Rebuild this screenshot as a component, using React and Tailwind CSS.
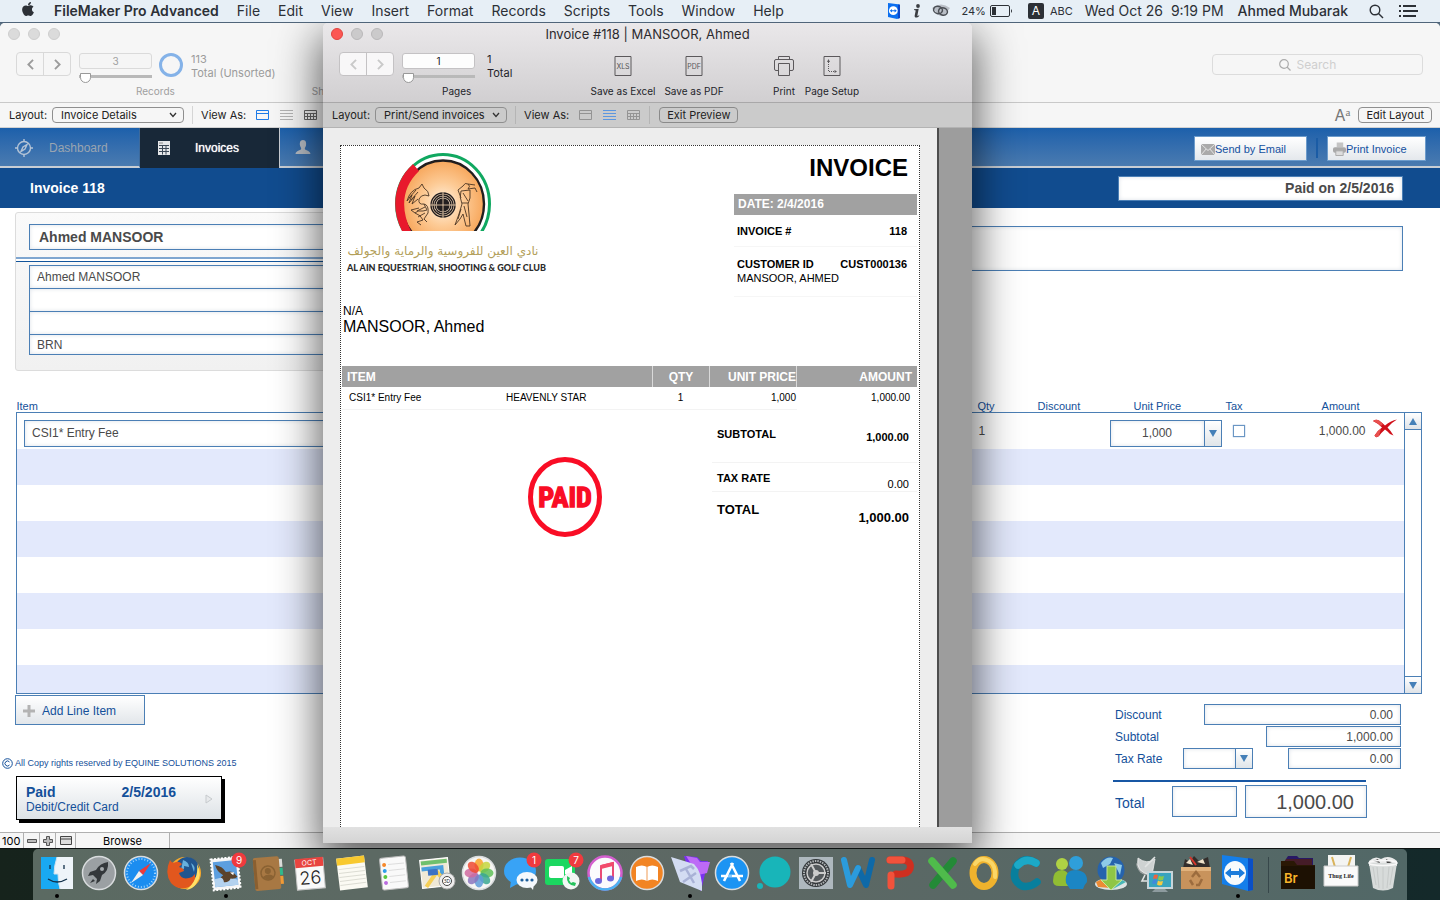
import React from "react";
import { FaApple } from "react-icons/fa";

const menus = ["File", "Edit", "View", "Insert", "Format", "Records", "Scripts", "Tools", "Window", "Help"];

function MenuBar() {
  return (
    <header className="relative z-20 flex h-[23px] shrink-0 items-center justify-between border-b border-[#50657a] bg-[#e7eff6] pl-5 pr-[22px] font-['Inter',sans-serif] text-[14px] leading-none text-[#2c3036]">
      <nav className="flex items-center gap-[18px] whitespace-nowrap" aria-label="Application menu">
        <button aria-label="Apple menu"><FaApple size={16} className="-mt-1" /></button>
        <button className="font-semibold">FileMaker Pro Advanced</button>
        {menus.map((m) => <button key={m}>{m}</button>)}
      </nav>
      <div className="flex items-center whitespace-nowrap">
        <svg width="14" height="16" viewBox="0 0 14 16" className="mr-3">
          <path d="M1 0L13 1.5V15L10 16L1 14Z" fill="#0b6ff0" />
          <path d="M11 1.5L13 2V15L11 15.5Z" fill="#0a46c9" />
          <circle cx="6.300" cy="7.700" r="4.400" fill="#fff" />
          <path d="M2.800 7.700L5 6v1.200h2.600V6L9.800 7.700 7.600 9.400V8.200H5v1.200Z" fill="#0b6ff0" />
        </svg>
        <svg width="8" height="14" viewBox="0 0 8 14" className="mr-2.5 text-[#3a3d42]" fill="currentColor">
          <circle cx="5" cy="2" r="1.900" /><path d="M1 5.200L5.700 4.800 4.400 11.400C4.300 12.300 5 12 6.300 11L6 12.300C4.500 14 1.200 14.300 1.700 11.600L2.700 6.400 1 6Z" />
        </svg>
        <svg width="20" height="14" viewBox="0 0 20 14" className="mr-2.5">
          <path d="M1 4Q10-3 19 4L13 12H9Z" fill="#b9bec6" />
          <g fill="none" stroke="#4b4f55" strokeWidth="1.500"><ellipse cx="7" cy="6" rx="4.500" ry="3.600" transform="rotate(15 7 6)" /><ellipse cx="12" cy="7.500" rx="4.500" ry="3.600" transform="rotate(15 12 7.500)" /></g>
        </svg>
        <span className="mr-1 text-[11px]">24%</span>
        <svg width="23" height="12" viewBox="0 0 23 12" className="mr-[15px]">
          <rect x=".5" y=".5" width="19" height="11" rx="1.500" fill="none" stroke="#2c3036" />
          <rect x="2" y="2" width="4" height="8" fill="#2c3036" /><path d="M21 4Q23 6 21 8Z" fill="#2c3036" />
        </svg>
        <span className="mr-1.5 flex h-4 w-4 items-center justify-center rounded-[2px] bg-[#2c3036] text-[12px] text-white">A</span>
        <span className="mr-3 text-[11px]">ABC</span>
        <span className="mr-2">Wed Oct 26</span>
        <span className="mr-3.5">9:19 PM</span>
        <span className="mr-[21px] font-medium">Ahmed Mubarak</span>
        <svg width="15" height="15" viewBox="0 0 15 15" className="mr-[15px]" fill="none" stroke="#2c3036" strokeWidth="1.400"><circle cx="6" cy="6" r="4.800" /><path d="M9.500 9.500L14 14" /></svg>
        <svg width="19" height="12" viewBox="0 0 19 12" fill="#2c3036"><path d="M0 0h2v2H0zM4 0h13v2H4zM0 5h2v2H0zM4 5h15v2H4zM0 10h2v2H0zM4 10h13v2H4z" /></svg>
      </div>
    </header>
  );
}

function Lights({ active }) {
  return (
    <div className="flex gap-2">
      <span className={active ? "h-3 w-3 rounded-full border border-[#e0443e] bg-[#fc5753]" : "h-3 w-3 rounded-full border border-[#cecece] bg-[#dbdbdb]"} />
      <span className={active ? "h-3 w-3 rounded-full border border-[#b9b8b9] bg-[#cbcacb]" : "h-3 w-3 rounded-full border border-[#cecece] bg-[#dbdbdb]"} />
      <span className={active ? "h-3 w-3 rounded-full border border-[#b9b8b9] bg-[#cbcacb]" : "h-3 w-3 rounded-full border border-[#cecece] bg-[#dbdbdb]"} />
    </div>
  );
}

function Chevron({ flip }) {
  return (
    <svg width="7" height="11" viewBox="0 0 8 13" fill="none" stroke="currentColor" strokeWidth="2.200">
      <path d={flip ? "M1 1L6.500 6.500 1 12" : "M7 1L1.500 6.500 7 12"} />
    </svg>
  );
}

function Pager({ value, label, active }) {
  return (
    <div className="flex gap-2">
      <div className={active ? "flex h-6 w-[55px] rounded-[4px] border border-[#c4c2c4] bg-[#f8f7f8] text-[#c9c9c9]" : "flex h-6 w-[55px] rounded-[4px] border border-[#d9d9d9] text-[#9b9b9b]"}>
        <button aria-label={`Previous ${label}`} className="flex flex-1 items-center justify-center border-r border-inherit"><Chevron /></button>
        <button aria-label={`Next ${label}`} className="flex flex-1 items-center justify-center"><Chevron flip /></button>
      </div>
      <div className="flex w-[73px] flex-col">
        <input aria-label={label} defaultValue={value} className={active ? "mt-px h-4 w-full rounded-[3px] border border-[#c4c2c4] bg-[#fdfdfd] text-center text-[10px] leading-none text-[#222]" : "mt-px h-4 w-full rounded-[3px] border border-[#dadada] bg-[#f5f5f5] text-center text-[10px] leading-none text-[#a0a0a0]"} />
        <input type="range" aria-label={`${label} slider`} defaultValue="2" className="mt-1 h-[10px] w-full appearance-none bg-[linear-gradient(#b9b9b9,#b9b9b9)] bg-[length:100%_3px] bg-[position:center_2px] bg-no-repeat [&::-webkit-slider-thumb]:h-[10px] [&::-webkit-slider-thumb]:w-[11px] [&::-webkit-slider-thumb]:appearance-none [&::-webkit-slider-thumb]:rounded-t-[2px] [&::-webkit-slider-thumb]:rounded-b-full [&::-webkit-slider-thumb]:border [&::-webkit-slider-thumb]:border-[#999] [&::-webkit-slider-thumb]:bg-white" />
      </div>
    </div>
  );
}

function LayoutSelect({ value }) {
  return (
    <label className="flex items-center gap-[5px] whitespace-nowrap">
      Layout:
      <span className="flex h-4 items-center rounded-[4px] border border-[#8f8f8f] pr-1.5">
        <select className="w-[120px] appearance-none bg-transparent pl-2 leading-none outline-none">
          <option>{value}</option>
        </select>
        <svg width="8" height="6" viewBox="0 0 8 6" fill="none" stroke="#333" strokeWidth="1.300" className="-ml-1"><path d="M1 1L4 4.500 7 1" /></svg>
      </span>
    </label>
  );
}

function ViewIcons({ selected }) {
  const form = selected === "form" ? "#1d7be8" : "#949494";
  const list = selected === "list" ? "#5c97e0" : "#b4b4b4";
  const table = selected === "form" ? "#666" : "#949494";
  return (
    <div className="flex items-center gap-[11px]">
      <button aria-label="Form view"><svg className="block" width="13" height="10" viewBox="0 0 13 10" fill="none" stroke={form}><path d="M.5.500h12v9H.500zM.5 3.500h12" /></svg></button>
      <button aria-label="List view"><svg className="block" width="13" height="10" viewBox="0 0 13 10" stroke={list}><path d="M0 .5h13M0 3.500h13M0 6.500h13M0 9.500h13" /></svg></button>
      <button aria-label="Table view"><svg className="block" width="13" height="10" viewBox="0 0 13 10" fill="none" stroke={table}><path d="M.5.500h12v9H.500zM.5 3.500h12M.5 6.500h12M3.500 3v6.500M6.500 3v6.500M9.500 3v6.500" /></svg></button>
    </div>
  );
}

function NavIcon({ children }) {
  return <svg width="20" height="20" viewBox="0 0 20 20" className="shrink-0">{children}</svg>;
}

const fieldCls = "border border-[#4b7fb5] bg-white text-[#4a4a4a] shadow-[inset_0_0_4px_#dde1e8] outline-none";

function Tri({ up }) {
  return <svg width="8" height="7" viewBox="0 0 8 7" fill="#4580b8"><path d={up ? "M4 0L8 7H0Z" : "M0 0H8L4 7Z"} /></svg>;
}

function Combo({ label, value, className }) {
  return (
    <span className={`flex border border-[#4b7fb5] ${className}`}>
      <input aria-label={label} defaultValue={value} className="min-w-0 flex-1 bg-white text-center text-[#4a4a4a] shadow-[inset_0_0_4px_#dde1e8] outline-none" />
      <button aria-label={`${label} options`} className="flex w-[17px] shrink-0 items-center justify-center border-l border-[#4b7fb5] bg-gradient-to-b from-white to-[#e0e5e9]"><Tri /></button>
    </span>
  );
}

function LineItems() {
  return (
    <div className="ml-4 mr-[18px] mt-[29px] flex">
      <table className="min-w-0 flex-1 table-fixed border-collapse text-[12px] leading-none text-[#4a4a4a]">
        <colgroup>
          <col /><col className="w-[58px]" /><col className="w-[74px]" /><col className="w-[118px]" /><col className="w-[34px]" /><col className="w-[112px]" /><col className="w-[36px]" />
        </colgroup>
        <thead>
          <tr className="h-3 text-left text-[11px] leading-[12px] text-[#14509a] [&>th]:p-0 [&>th]:font-normal">
            <th>Item</th>
            <th><span className="pl-[5px]">Qty</span></th>
            <th><span className="pl-[7px]">Discount</span></th>
            <th><span className="pl-[29px]">Unit Price</span></th>
            <th><span className="pl-[3px]">Tax</span></th>
            <th className="text-right"><span className="pr-[9px]">Amount</span></th>
            <th aria-label="Delete" />
          </tr>
        </thead>
        <tbody className="border border-[#4b7fb5] [&_td]:p-0">
          <tr className="h-9 bg-white">
            <td><input aria-label="Item" defaultValue="CSI1* Entry Fee" className={`ml-[7px] mt-[5px] block h-[27px] w-[calc(100%-16px)] px-[7px] text-[12px] ${fieldCls}`} /></td>
            <td><span className="pl-1.5">1</span></td>
            <td />
            <td><Combo label="Unit price" value="1,000" className="ml-[5px] mt-[5px] h-[27px] w-[112px] text-[12px]" /></td>
            <td><input type="checkbox" aria-label="Tax" className="ml-2.5 mt-px block h-3 w-3 appearance-none border border-[#6a96c4] bg-white shadow-[0_0_1px_#6a96c4]" /></td>
            <td className="text-right"><span className="pr-[3px]">1,000.00</span></td>
            <td>
              <button aria-label="Delete line" className="-mt-1 ml-1 block">
                <svg width="24" height="19" viewBox="0 0 24 19"><path d="M0 2Q3 0 6 1.500Q9 3.500 12 6.500Q18 1.500 24 .5Q18 4 14.500 8.500Q18 12 20.500 16.500L17 15Q14.500 12 12 10.500Q8 14 6 17Q3 19.500 1.500 16.500Q4 12 9 8.500Q6 5 0 2Z" fill="#d0101a" /><path d="M0 2Q3 0 6 1.500L10 5 8 7Q5 4 0 2ZM2 16Q5 11 8 9.500L6 17Q3 19.500 1.500 16.500Z" fill="#e8504e" /></svg>
              </button>
            </td>
          </tr>
          {[1, 2, 3, 4, 5, 6, 7].map((i) => (
            <tr key={i} className={i === 7 ? "h-[29px] bg-[#e3e9fc]" : i % 2 ? "h-9 bg-[#e3e9fc]" : "h-9 bg-white"}><td colSpan="7" /></tr>
          ))}
        </tbody>
      </table>
      <div className="mt-3 flex w-[17px] flex-col border border-l-0 border-[#4b7fb5] bg-white">
        <button aria-label="Scroll up" className="flex h-[17px] items-center justify-center border-b border-[#4b7fb5] bg-gradient-to-b from-white to-[#dfe3e8]"><Tri up /></button>
        <span className="flex-1" />
        <button aria-label="Scroll down" className="flex h-[17px] items-center justify-center border-t border-[#4b7fb5] bg-gradient-to-b from-white to-[#dfe3e8]"><Tri /></button>
      </div>
    </div>
  );
}

function DetailsWindow() {
  return (
    <section className="flex flex-1 flex-col rounded-t-[5px] bg-white font-['Liberation_Sans',Arial,sans-serif]">
      <div className="flex h-20 shrink-0 justify-between rounded-t-[5px] border-b border-[#c9c9c9] bg-[#f6f6f6] font-['Inter',sans-serif]">
        <div className="flex flex-col pl-2 pt-[5px]">
          <Lights />
          <div className="ml-2 mt-3 flex">
            <Pager value="3" label="Records" />
            <svg width="24" height="24" viewBox="0 0 24 24" className="ml-[7px] mt-px"><circle cx="12" cy="12" r="10.500" fill="none" stroke="#84b2e8" strokeWidth="3" /></svg>
            <div className="ml-2 text-[11px] leading-[14px] text-[#9b9b9b]">113<br />Total (Unsorted)</div>
          </div>
          <div className="ml-[128px] mt-px flex gap-[137px] text-[10px] leading-[14px] text-[#a0a0a0]"><span>Records</span><span>Sh</span></div>
        </div>
        <label className="mr-[17px] mt-[31px] flex h-[21px] w-[211px] items-center justify-center gap-1.5 rounded-[4px] border border-[#dcdcdc] text-[12px]">
          <svg width="12" height="12" viewBox="0 0 12 12" fill="none" stroke="#ababab" strokeWidth="1.200"><circle cx="5" cy="5" r="4.300" /><path d="M8 8L11.500 11.500" /></svg>
          <input aria-label="Search" placeholder="Search" className="w-[60px] bg-transparent outline-none placeholder:text-[#cfcfcf]" />
        </label>
      </div>
      <div className="flex h-[25px] shrink-0 items-center justify-between border-b border-[#d2d2d2] bg-[#f6f6f6] pl-[9px] pr-2 font-['Inter',sans-serif] text-[11px] text-[#222]">
        <div className="flex items-center">
          <LayoutSelect value="Invoice Details" />
          <span className="mx-2 h-[18px] w-px bg-[#d5d5d5]" />
          <span className="mr-2.5">View As:</span>
          <ViewIcons selected="form" />
        </div>
        <div className="flex items-center gap-2">
          <button aria-label="Formatting bar" className="text-[16px] leading-none text-[#777]">A<sup className="font-['Liberation_Serif',serif] text-[11px]">a</sup></button>
          <button className="h-4 rounded-[4px] border border-[#8f8f8f] px-[7px] leading-none">Edit Layout</button>
        </div>
      </div>
      <div className="flex h-10 shrink-0 justify-between bg-[#114c8f] text-[12px]">
        <nav className="flex flex-1" aria-label="Sections">
          <a href="#dashboard" className="flex w-[140px] items-center border-b-2 border-r border-b-[#c9ced4] border-r-[#3d6a9c] bg-gradient-to-b from-[#1c60ab] to-[#4a7bb0] pl-3.5 pt-0.5 text-[#9aa5b1]">
            <NavIcon><g fill="none" stroke="#b4c4d6" strokeWidth="1.400"><circle cx="10" cy="10" r="6.500" /><path d="M10 1v3M10 16v3M1 10h3M16 10h3M13 6.500L9 9 7 13.500 11 11Z" /></g></NavIcon>
            <span className="ml-[15px]">Dashboard</span>
          </a>
          <a href="#invoices" className="flex w-[139px] items-center bg-[#182838] pl-3.5 text-white">
            <NavIcon><path d="M4 3h12v14H4z" fill="#e5e7e9" /><path d="M5 7.500h10M5 10.500h10M5 13.500h10M8.500 7.500v9M12 7.500v9" stroke="#3b4856" /><path d="M5 5h4" stroke="#888" /></NavIcon>
            <span className="ml-[21px] [text-shadow:0_0_1px_#fff]">Invoices</span>
          </a>
          <a href="#contacts" aria-label="Contacts" className="flex flex-1 items-center border-b-2 border-l border-b-[#c9ced4] border-l-[#c9ced4] bg-gradient-to-b from-[#1c60ab] to-[#4a7bb0] pl-[13px]">
            <NavIcon><path d="M10 3C13 3 13.500 6 13 8.500C12.600 10.200 11.800 10.500 11.800 12C12.500 13.500 17 13.500 17.500 17H2.500C3 13.500 7.500 13.500 8.200 12C8.200 10.500 7.400 10.200 7 8.500C6.500 6 7 3 10 3Z" fill="#b8bec5" /></NavIcon>
          </a>
        </nav>
        <div className="flex items-center border-b-2 border-[#c9ced4] bg-gradient-to-b from-[#1c60ab] to-[#4a7bb0] pr-3.5 pt-0.5 text-[11px]">
          <button className="flex h-[25px] w-[113px] items-center border border-[#6d9ccc] bg-gradient-to-b from-white to-[#e4e8ec] pl-1.5 pt-0.5 text-[#1450a0]">
            <svg width="14" height="11" viewBox="0 0 15 11" preserveAspectRatio="none"><path d="M0 0h15v11H0z" fill="#aaa" /><path d="M0 0L7.500 6.500 15 0M0 11L5.500 5M15 11L9.500 5" fill="none" stroke="#e6e6e6" /></svg>Send by Email
          </button>
          <span className="mx-[9px] h-5 w-0.5 bg-[#1b5ca5]" />
          <button className="flex h-[25px] w-[99px] items-center border border-[#6d9ccc] bg-gradient-to-b from-white to-[#e4e8ec] pl-[5px] pt-0.5 text-[#1450a0]">
            <svg width="13" height="14" viewBox="0 0 14 14"><path d="M4 0h7v5H4z" fill="#c4c4c4" /><rect y="5" width="14" height="6" rx="2" fill="#a9a9a9" /><path d="M3 9h8v5H3z" fill="#ddd" stroke="#aaa" /></svg>Print Invoice
          </button>
        </div>
      </div>
      <div className="flex h-10 shrink-0 items-center justify-between bg-[#114c8f] pl-[30px] pr-[37px] font-bold">
        <h1 className="text-[14px] text-white">Invoice 118</h1>
        <input aria-label="Status" defaultValue="Paid on 2/5/2016" className={`h-[25px] w-[285px] pr-2 text-right text-[14px] ${fieldCls}`} />
      </div>

      <div className="mt-1 flex justify-between">
        <div className="ml-[15px] h-[159px] w-[420px] rounded-[3px] border border-[#dcdcdc] bg-gradient-to-b from-[#fafafa] to-[#f1f1f1] pt-[11px]">
          <input aria-label="Customer" defaultValue="Ahmed MANSOOR" className={`ml-[13px] block h-[26px] w-[390px] px-[9px] text-[14px] font-bold ${fieldCls}`} />
          <div className="mt-[7px] h-[5px] border-b border-t-2 border-b-[#12549b] border-t-[#7fa6d0] bg-white" />
          <div className="ml-[13px] mt-[3px] flex w-[390px] flex-col">
            <input aria-label="Address line 1" defaultValue="Ahmed MANSOOR" className={`h-6 px-[7px] text-[12px] ${fieldCls}`} />
            <input aria-label="Address line 2" className={`-mt-px h-6 px-[7px] text-[12px] ${fieldCls}`} />
            <input aria-label="Address line 3" className={`-mt-px h-6 px-[7px] text-[12px] ${fieldCls}`} />
            <input aria-label="Country" defaultValue="BRN" className={`-mt-px h-[21px] px-[7px] text-[12px] ${fieldCls}`} />
          </div>
        </div>
        <textarea aria-label="Notes" className={`mr-[37px] mt-3.5 h-[45px] w-[600px] resize-none ${fieldCls}`} />
      </div>

      <LineItems />

      <div className="flex flex-1 justify-between text-[#14509a]">
        <div className="flex flex-col items-start">
          <button className="ml-[15px] mt-px flex h-[30px] w-[130px] items-center gap-[7px] border border-[#4b7fb5] bg-gradient-to-b from-white to-[#e2e6ea] pl-[7px] pt-px text-[12px]">
            <svg width="12" height="12" viewBox="0 0 12 12" fill="#b3b3b3"><path d="M4.500 0h3v4.500H12v3H7.500V12h-3V7.500H0v-3h4.500z" /></svg>Add Line Item
          </button>
          <div className="ml-0.5 mt-8 flex items-center gap-0.5 text-[9px] leading-[12px]">
            <svg width="11" height="11" viewBox="0 0 11 11" fill="none" stroke="#14509a"><circle cx="5.500" cy="5.500" r="4.800" /><path d="M7.500 4A2.500 2.500 0 1 0 7.500 7" /></svg>
            All Copy rights reserved by EQUINE SOLUTIONS 2015
          </div>
          <button className="ml-4 mt-[7px] flex h-[44px] w-[206px] items-center justify-between border border-black bg-gradient-to-b from-white to-[#dde2e6] pl-[9px] pr-2 pt-0.5 text-left shadow-[3px_3px_0_#000]">
            <span className="flex w-[150px] flex-col">
              <span className="flex justify-between text-[14px] font-bold leading-[16px]"><span>Paid</span><span>2/5/2016</span></span>
              <span className="text-[12px] leading-[14px]">Debit/Credit Card</span>
            </span>
            <svg width="8" height="10" viewBox="0 0 8 10" fill="#e8eaec" stroke="#c6cacd"><path d="M1 1L7 5 1 9Z" /></svg>
          </button>
        </div>
        <div className="mr-[39px] mt-2.5 flex w-[288px] flex-col text-[12px]">
          <label className="mb-px flex items-center justify-between pl-0.5">Discount<input defaultValue="0.00" className={`h-[21px] w-[197px] pr-[7px] pt-px text-right ${fieldCls}`} /></label>
          <label className="mb-px flex items-center justify-between pl-0.5">Subtotal<input defaultValue="1,000.00" className={`h-[21px] w-[135px] pr-[7px] pt-px text-right ${fieldCls}`} /></label>
          <div className="flex items-center pl-0.5"><span className="w-[68px]">Tax Rate</span><Combo label="Tax rate" className="h-[21px] w-[70px]" /><input aria-label="Tax amount" defaultValue="0.00" className={`ml-auto h-[21px] w-[113px] pr-[7px] pt-px text-right ${fieldCls}`} /></div>
          <div className="mr-[35px] mt-[11px] h-0.5 bg-[#1857a4]" />
          <div className="mr-[34px] mt-[3px] flex items-center pl-0.5"><span className="pt-1 text-[14px]">Total</span><input aria-label="Currency" className={`ml-auto mr-2 h-[31px] w-[65px] ${fieldCls}`} /><input aria-label="Total" defaultValue="1,000.00" className={`h-[33px] w-[122px] pr-3 pt-0.5 text-right text-[20px] ${fieldCls}`} /></div>
        </div>
      </div>

      <footer className="flex h-4 shrink-0 items-stretch border-t border-[#b0b0b0] bg-[#f6f6f6] font-['Inter',sans-serif] text-[11px] leading-[16px] text-black">
        <span className="w-6 border-r border-[#b0b0b0] pl-0.5">100</span>
        <button aria-label="Zoom out" className="flex w-4 items-center justify-center border-r border-[#b0b0b0]"><svg width="10" height="4" viewBox="0 0 10 4"><path d="M.5.500h9v3H.500z" fill="#bbb" stroke="#555" /></svg></button>
        <button aria-label="Zoom in" className="flex w-4 items-center justify-center border-r border-[#b0b0b0]"><svg width="10" height="10" viewBox="0 0 10 10"><path d="M3.500.500h3v3h3v3h-3v3h-3v-3h-3v-3h3z" fill="#bbb" stroke="#555" /></svg></button>
        <button aria-label="Toggle status toolbar" className="flex w-5 items-center justify-center border-r border-[#b0b0b0]"><svg width="12" height="9" viewBox="0 0 12 9"><path d="M.5.500h11v8H.500zM.5 3h11" fill="#ddd" stroke="#444" /></svg></button>
        <button className="w-[94px] border-r border-[#b0b0b0]">Browse</button>
      </footer>
    </section>
  );
}

function ClubLogo() {
  return (
    <svg width="96" height="78" viewBox="0 0 96 78" className="ml-12 block">
      <defs><radialGradient id="sun"><stop offset="0" stopColor="#fff3e4" /><stop offset=".5" stopColor="#fdcb96" /><stop offset="1" stopColor="#f7a75c" /></radialGradient></defs>
      <ellipse cx="48" cy="51" rx="46.500" ry="49.500" fill="#fff" stroke="#10a860" strokeWidth="3" />
      <ellipse cx="48" cy="51" rx="41" ry="43.500" fill="url(#sun)" stroke="#211d1e" strokeWidth="2.400" />
      <path d="M7 78C-5 55-1 28 18 11L24 18C7 34 5 56 16 78Z" fill="#e8192c" />
      <g fill="none" stroke="#231f20" strokeWidth="1.400"><circle cx="48" cy="52" r="12" /><circle cx="48" cy="52" r="10" /><circle cx="48" cy="52" r="8" /><circle cx="48" cy="52" r="6" fill="#231f20" /></g>
      <path d="M48 39v26M35 52h26" stroke="#f8d9b5" strokeWidth=".8" />
      <g fill="none" stroke="#4b3524" strokeWidth=".9" strokeLinejoin="round">
        <path d="M12 48Q15 37 24 35L27 31 29 35Q34 38 34 43L30 42Q26 42 24 46Q23 52 29 51L32 57 28 58Q22 57 20 60Q26 62 28 67L22 69 26 72M12 48L17 42 14 50 20 43 17 51 23 46M14 45L21 37M16 47L23 39M29 51Q34 52 33 60L29 66 32 69M20 60L16 57 24 55M22 58L30 54M23 64L30 60" />
        <path d="M63 37L68 33Q70 29 73 31Q76 33 73 36L80 35 82 39M66 38L75 37Q76 46 73 51L74 61 75 73 71 73 68 61 65 66 60 72 64 61 67 51Q64 44 66 38ZM73 31L80 32M67 50h6M63 37L66 45M68 40L73 48M69 53L72 64M66 56L63 66" />
      </g>
    </svg>
  );
}

function PrintedInvoice() {
  return (
    <article className="min-h-0 flex-1 overflow-hidden border border-b-0 border-dotted border-[#333] bg-white pl-px pr-0.5 text-black">
      <div className="flex justify-between">
        <div className="pl-[5px] pt-[7px]">
          <ClubLogo />
          <p dir="rtl" lang="ar" className="mt-2 w-[192px] whitespace-nowrap text-center font-['DejaVu_Sans',sans-serif] text-[12px] leading-[24px] text-[#b3a05a]">نادي العين للفروسية والرماية والجولف</p>
          <p className="w-[192px] whitespace-nowrap text-center font-['Lato',sans-serif] text-[9px] font-black leading-[10px] text-[#2b2b2b]">AL AIN EQUESTRIAN, SHOOTING &amp; GOLF CLUB</p>
        </div>
        <div className="w-[183px]">
          <h2 className="pr-[9px] pt-[6px] text-right text-[24px] font-bold leading-[32px]">INVOICE</h2>
          <p className="mt-[10px] h-[21px] bg-[#a1a1a1] pl-1 text-[12px] font-bold leading-[21px] text-white">DATE: 2/4/2016</p>
          <div className="flex justify-between border-b border-[#f6f6f6] pb-2 pl-[3px] pr-2.5 pt-[9px] text-[11px] font-bold leading-[14px]"><span>INVOICE #</span><span>118</span></div>
          <div className="border-b border-[#f6f6f6] pb-[11px] pl-[3px] pr-2.5 pt-2.5 text-[11px] leading-[14px]">
            <div className="flex justify-between font-bold"><span>CUSTOMER ID</span><span>CUST000136</span></div>
            <p>MANSOOR, AHMED</p>
          </div>
        </div>
      </div>
      <div className="mt-[7px] pl-px leading-[15px]"><p className="text-[12px]">N/A</p><p className="text-[16px]">MANSOOR, Ahmed</p></div>
      <table className="mt-8 w-full table-fixed border-separate border-spacing-0">
        <colgroup><col className="w-[164px]" /><col /><col className="w-[57px]" /><col className="w-[88px]" /><col className="w-[120px]" /></colgroup>
        <thead>
          <tr className="h-[21px] bg-[#a1a1a1] text-left text-[12px] leading-none text-white [&>th]:p-0">
            <th colSpan="2"><span className="pl-[5px]">ITEM</span></th>
            <th className="border-l border-[#d9d9d9] text-center">QTY</th>
            <th className="border-l border-r border-[#d9d9d9] text-right">UNIT PRICE</th>
            <th className="text-right"><span className="pr-[5px]">AMOUNT</span></th>
          </tr>
        </thead>
        <tbody>
          <tr className="h-[23px] text-[10px] leading-none [&>td]:border-b [&>td]:border-[#f3f3f3] [&>td]:p-0 [&>td:last-child]:border-white">
            <td><span className="pl-[7px]">CSI1* Entry Fee</span></td>
            <td>HEAVENLY STAR</td>
            <td className="text-center">1</td>
            <td className="text-right"><span className="pr-px">1,000</span></td>
            <td className="text-right"><span className="pr-[7px]">1,000.00</span></td>
          </tr>
        </tbody>
      </table>
      <div className="flex justify-between">
        <svg width="76" height="82" viewBox="0 0 76 82" className="ml-[185px] mt-[46px]" role="img" aria-label="Paid stamp">
          <ellipse cx="38" cy="41" rx="34.500" ry="37.500" fill="none" stroke="#f90d25" strokeWidth="5" />
          <text x="38" y="51" textAnchor="middle" fill="#f90d25" stroke="#f90d25" strokeWidth="1.400" fontSize="28" fontWeight="700" fontFamily="'Liberation Sans Narrow','Roboto Condensed','DejaVu Sans Condensed',sans-serif">PAID</text>
        </svg>
        <dl className="w-[205px] text-[11px] font-bold leading-[14px]">
          <div className="flex h-[53px] justify-between border-b border-[#f3f3f3] pl-[5px] pr-2 pt-[17px]"><dt>SUBTOTAL</dt><dd className="pt-[3px]">1,000.00</dd></div>
          <div className="flex h-[29px] justify-between border-b border-[#f3f3f3] pl-[5px] pr-2 pt-2"><dt>TAX RATE</dt><dd className="pt-1.5 font-normal">0.00</dd></div>
          <div className="flex justify-between pl-[5px] pr-2 pt-[11px] text-[13px]"><dt>TOTAL</dt><dd className="pt-2">1,000.00</dd></div>
        </dl>
      </div>
    </article>
  );
}

function ToolButton({ label, className, children }) {
  return (
    <button className={`flex flex-col items-center whitespace-nowrap ${className}`}>
      <svg width="22" height="22" viewBox="0 0 22 22" fill="none" stroke="#5b585b">{children}</svg>
      <span className="mt-[7px] text-[10px] leading-[14px] text-[#231f2a]">{label}</span>
    </button>
  );
}

function PreviewWindow() {
  return (
    <section className="absolute bottom-[5px] left-[323px] top-0 z-10 flex w-[649px] flex-col rounded-t-[5px] bg-[#ededed] font-['Liberation_Sans',Arial,sans-serif] shadow-[0_16px_44px_4px_#000000a0]">
      <div className="flex h-20 shrink-0 flex-col rounded-t-[5px] border-b border-[#a9a8a9] bg-gradient-to-b from-[#eae8ea] to-[#d1cfd1] px-2 pt-[5px] font-['Inter',sans-serif]">
        <div className="grid grid-cols-[52px_1fr_52px] items-center"><Lights active /><h2 className="text-center text-[13px] leading-[12px] text-[#2c2a2e]">Invoice #118 | MANSOOR, Ahmed</h2></div>
        <div className="flex pl-2 pt-3">
          <div><Pager value="1" label="Pages" active /><p className="ml-[103px] mt-px text-[10px] leading-[14px] text-[#231f2a]">Pages</p></div>
          <p className="ml-3 w-[103px] text-[11px] leading-[14px] text-[#231f2a]">1<br />Total</p>
          <ToolButton label="Save as Excel" className="mt-[3px] w-[66px]"><path d="M3 1.500h16v19H3z" /><text x="11" y="14" textAnchor="middle" fontSize="7" fill="#555" stroke="none">XLS</text></ToolButton>
          <ToolButton label="Save as PDF" className="ml-2 mt-[3px] w-[60px]"><path d="M3 1.500h16v19H3z" /><text x="11" y="14" textAnchor="middle" fontSize="7" fill="#555" stroke="none">PDF</text></ToolButton>
          <ToolButton label="Print" className="ml-12 mt-[3px] w-6"><path d="M5.500 4.500v-3h11v3M5 15.500H3Q1.500 15.500 1.500 14V6Q1.500 4.500 3 4.500H19Q20.500 4.500 20.500 6V14Q20.500 15.500 19 15.500H17M5.500 8.500h11v12h-11z" /></ToolButton>
          <ToolButton label="Page Setup" className="ml-2 mt-[3px] w-[56px]"><path d="M3 1.500h16v19H3z" /><path d="M7.500 7V16.500H14" strokeDasharray="1 1" /><path d="M7.500 4L9 7H6ZM16 16.500L13.500 15V18Z" fill="#5b585b" stroke="none" /></ToolButton>
        </div>
      </div>
      <div className="flex h-[25px] shrink-0 items-center border-b border-[#b3b3b3] bg-[#cbcbcb] pl-[9px] font-['Inter',sans-serif] text-[11px] text-[#222]">
        <LayoutSelect value="Print/Send invoices" />
        <span className="mx-2 h-[18px] w-px bg-[#b5b5b5]" />
        <span className="mr-2.5">View As:</span>
        <ViewIcons selected="list" />
        <span className="mx-[9px] h-[18px] w-px bg-[#b5b5b5]" />
        <button className="h-4 rounded-[4px] border border-[#8a8a8a] px-[7px] leading-none">Exit Preview</button>
      </div>
      <div className="flex min-h-0 flex-1">
        <div className="flex flex-1 flex-col bg-[#ededed] pl-[17px] pr-[17px] pt-[17px]"><PrintedInvoice /></div>
        <div className="w-[35px] border-l-2 border-[#4d4d4d] bg-[#9d9d9d]" />
      </div>
      <div className="h-4 shrink-0 bg-gradient-to-b from-[#e1e1e1] to-[#d4d4d4]" />
    </section>
  );
}

function Badge({ n }) {
  return <g><circle cx="31" cy="5" r="7.500" fill="#f03a3e" /><text x="31" y="8.500" textAnchor="middle" fontSize="10" fill="#fff" fontFamily="Inter, sans-serif">{n}</text></g>;
}

const ring = (fill) => <circle cx="18" cy="18" r="16.500" fill={fill} stroke="#d9dcde" strokeWidth="1.500" />;

const dockApps = [
  { name: "Finder", on: true, art: <><path d="M2 2h32v32H2z" fill="#eef4f9" /><path d="M2 2H18Q15 11 15 19H19Q19 28 21 34H2Z" fill="#19a9f2" /><path d="M18 2Q15 11 15 19H19Q19 28 21 34" fill="none" stroke="#cfe3f1" /><path d="M11 10v4M25 10v4M9 24Q18 30 28 24" fill="none" stroke="#12304a" strokeWidth="1.300" /></> },
  { name: "Launchpad", art: <>{ring("#9ba0a3")}<path d="M27 7Q19 8 15 15L9 17 7 21 12 20 16 24 15 29 19 26 21 20Q28 16 27 7ZM12 24L9 28 14 26Z" fill="#34383b" /><circle cx="21" cy="14" r="2" fill="#a5aaad" /></> },
  { name: "Safari", art: <>{ring("#1b8df0")}<circle cx="18" cy="18" r="14" fill="none" stroke="#9fd2fa" strokeDasharray="1 2" strokeWidth="2" /><path d="M28 8L16 16 20 20Z" fill="#ec3b3b" /><path d="M8 28L16 16 20 20Z" fill="#f1f1f1" /></> },
  { name: "Firefox", art: <><circle cx="19" cy="18" r="16" fill="#f7a92c" /><circle cx="21" cy="14" r="12" fill="#20558f" /><path d="M17 5Q23 7 23 12L18 11Q19 15 15 15ZM25 8Q30 11 28 17Z" fill="#66b0dd" /><path d="M4 5Q6 9 10 7Q13 6 16 9L13 12Q18 13 18 16L13 18Q15 25 23 23Q27 22 29 19Q30 28 23 32Q12 36 5 28Q-2 18 4 5Z" fill="#e2571e" /><path d="M31 9Q37 20 30 29Q27 34 20 35Q33 25 31 9Z" fill="#ffe067" /></> },
  { name: "Mail", on: true, art: <g><g transform="rotate(-6 18 18)"><path d="M4 3h27v31H4z" fill="#f5f5f5" stroke="#fff" strokeDasharray="2 1.500" strokeWidth="2" /><path d="M6 6h23v25H6z" fill="#5d9fdf" /><path d="M6 23Q20 20 29 26V31H6Z" fill="#b3d2ef" /><path d="M8 9Q15 11 18 17Q24 16 26 19L29 23Q26 25 22 24Q20 28 15 27Q15 23 12 22L15 20Q9 16 8 9Z" fill="#5b432b" /><path d="M22 18L26 18 25 21Z" fill="#fff" /></g><Badge n="9" /></g> },
  { name: "Contacts", art: <g transform="rotate(-5 18 18)"><path d="M29 5h4v8h-4z" fill="#dadcd9" /><path d="M29 14h4v7h-4z" fill="#30b98b" /><path d="M29 22h4v8h-4z" fill="#f09a36" /><rect x="4" y="2" width="26" height="33" rx="2" fill="#a87843" /><path d="M4 4h3v29H4z" fill="#8a5f30" /><circle cx="18" cy="18" r="7" fill="none" stroke="#8a6233" strokeWidth="1.500" /><circle cx="18" cy="16" r="3" fill="#8a6233" /><path d="M12 22Q18 17 24 22L18 25Z" fill="#8a6233" /></g> },
  { name: "Calendar", art: <g transform="rotate(-5 18 18)"><path d="M4 4h28v30H4z" fill="#f9f9f9" stroke="#c7c7c7" /><path d="M4 3h28v9H4z" fill="#e8443f" /><text x="18" y="10" textAnchor="middle" fontSize="7" fill="#fff" fontFamily="Inter">OCT</text><text x="18" y="29" textAnchor="middle" fontSize="18" fontWeight="300" fill="#222" fontFamily="Inter">26</text></g> },
  { name: "Notes", art: <g transform="rotate(-7 18 18)"><path d="M4 2h28v32H4z" fill="#fbfaf3" /><path d="M4 2h28v7H4z" fill="#f8c92f" /><path d="M5 13h26M5 17h26M5 21h26M5 25h26M5 29h26" stroke="#dcdcd3" /></g> },
  { name: "Reminders", art: <g transform="rotate(-6 18 18)"><rect x="5" y="2" width="26" height="32" rx="2" fill="#f9f9f9" stroke="#bbb" /><path d="M13 9h16M13 15h16M13 21h16M13 27h16" stroke="#ddd" /><circle cx="9" cy="9" r="2" fill="#f6892c" /><circle cx="9" cy="15" r="2" fill="#2f9ee9" /><circle cx="9" cy="21" r="2" fill="#58c840" /><circle cx="9" cy="27" r="2" fill="#ba6be0" /></g> },
  { name: "Maps", art: <><g transform="rotate(-6 16 18)"><path d="M2 4h28v28H2z" fill="#efe9d6" stroke="#fff" /><path d="M3 5h26v4H3z" fill="#6fc06d" /><path d="M3 13h20v14" fill="none" stroke="#4aa0dd" strokeWidth="4" /><path d="M6 31L18 17 24 26" stroke="#f5cf56" strokeWidth="4" fill="none" /><path d="M9 14h10v6H9z" fill="#3c72c4" /></g><circle cx="28" cy="26" r="8" fill="#eee" stroke="#aaa" /><circle cx="28" cy="26" r="4.500" fill="#fff" stroke="#444" /><text x="28" y="28" fontSize="5" textAnchor="middle" fill="#222">3D</text></> },
  { name: "Photos", art: <>{ring("#f6f6f4")}{["#f8a228", "#c6d63e", "#5fbf58", "#3aa891", "#5f9bd8", "#8a76bd", "#d06aa0", "#ee4a33"].map((c, i) => <ellipse key={c} cx="18" cy="10" rx="4.500" ry="6.500" fill={c} opacity=".85" transform={`rotate(${i * 45} 18 18)`} />)}</> },
  { name: "Messages", art: <><ellipse cx="17" cy="16" rx="16" ry="13.500" fill="#38a3f6" /><path d="M8 25L7 33 16 28Z" fill="#38a3f6" /><ellipse cx="24" cy="25" rx="10.500" ry="8" fill="#f4f9fd" /><path d="M26 30L30 35 31 29Z" fill="#f4f9fd" /><circle cx="19" cy="25" r="1.600" fill="#1c5f9c" /><circle cx="24" cy="25" r="1.600" fill="#1c5f9c" /><circle cx="29" cy="25" r="1.600" fill="#1c5f9c" /><Badge n="1" /></> },
  { name: "FaceTime", art: <><rect x="0" y="4" width="30" height="26" rx="3" fill="#1bd760" /><rect x="4" y="11" width="15" height="12" rx="2" fill="#fff" /><path d="M20 15L27 11V22L20 19Z" fill="#fff" /><circle cx="26" cy="26" r="8.500" fill="#f3f6f4" /><path d="M22 21Q21 30 30 31L31 28 28 27 26 28 24 25 25 23Z" fill="#25c25c" /><Badge n="7" /></> },
  { name: "iTunes", art: <><circle cx="18" cy="18" r="16.500" fill="#fbfbfd" stroke="#d35fce" strokeWidth="2.500" /><path d="M2 22A16.500 16.500 0 0 0 34 22" fill="none" stroke="#4cb3f2" strokeWidth="2.500" /><path d="M14 26V11L26 8V23" fill="none" stroke="#ea4a76" strokeWidth="2" /><path d="M14 10L26 7V11L14 14Z" fill="#f24a6c" /><ellipse cx="11.500" cy="26" rx="3.500" ry="3" fill="#6f68dc" /><ellipse cx="23.500" cy="23.500" rx="3.500" ry="3" fill="#6f68dc" /></> },
  { name: "iBooks", art: <>{ring("#f28423")}<path d="M18 12Q13 9 7 12V26Q13 23 18 26Q23 23 29 26V12Q23 9 18 12Z" fill="#fff" /><path d="M18 12V26" stroke="#ef9b55" /></> },
  { name: "FileMaker Pro", on: true, art: <><path d="M12 1L25 2 29 6 36 6 29 36 20 28Z" fill="#7a32ee" /><path d="M14 1L25 3 28 7 38 7 35 18 26 20Z" fill="#bd6af6" /><path d="M-1 2L22 9Q31 18 30 36L8 27Z" fill="#d3dcf2" /><path d="M8 16L19 11 22 14M11 27L24 18M14 14L22 28" stroke="#a9b2d6" strokeWidth="2.500" fill="none" /></> },
  { name: "App Store", art: <>{ring("#1c94f3")}<path d="M19 8L10 26M17 8L26 26M7 21H29" stroke="#fff" strokeWidth="2.600" /><path d="M14 21h4" stroke="#1c94f3" /></> },
  { name: "Chat", art: <><circle cx="19" cy="17" r="15.500" fill="#18b5b9" /><circle cx="4" cy="31" r="3" fill="#18b5b9" /></> },
  { name: "System Preferences", art: <><path d="M1 2h34v32H1z" fill="#aeb8be" /><circle cx="18" cy="18" r="14" fill="#33373a" /><circle cx="18" cy="18" r="12" fill="none" stroke="#b0b4b6" strokeWidth="2" strokeDasharray="1.500 1" /><circle cx="18" cy="18" r="9" fill="#54595c" stroke="#ccc" strokeWidth="1.500" /><path d="M18 18L28 18M18 18L13 9M18 18L13 27" stroke="#ccc" strokeWidth="2" /><circle cx="18" cy="18" r="3" fill="#ccc" /></> },
  { name: "Word", art: <g fill="none" strokeLinecap="round" strokeLinejoin="round" strokeWidth="6"><path d="M32 5L26 30 18 13" stroke="#0e69a8" /><path d="M4 5L10 30 18 13" stroke="#2b9bdc" /></g> },
  { name: "PowerPoint", art: <g fill="none" strokeLinecap="round" strokeWidth="7"><path d="M8 5H21Q30 6 28 14Q26 20 14 19" stroke="#cf2f20" /><path d="M8 5H20M9 20V31" stroke="#f2523b" /></g> },
  { name: "Excel", art: <g strokeLinecap="round" strokeWidth="7.500"><path d="M28 6L8 30" stroke="#238a37" /><path d="M7 6L28 30" stroke="#4fbb4b" /></g> },
  { name: "Outlook", art: <><ellipse cx="17" cy="18" rx="11" ry="13.500" fill="none" stroke="#efb22d" strokeWidth="7" /><path d="M8 9Q13 1 22 6Q29 10 28 22" fill="none" stroke="#fbd767" strokeWidth="4" strokeLinecap="round" /></> },
  { name: "Communicator", art: <g fill="none" strokeLinecap="round" strokeWidth="7.500"><path d="M27 8Q14 0 7 12Q2 25 13 31Q21 33 28 27" stroke="#087f9d" /><path d="M27 8Q17 2 9 10" stroke="#1ca9c7" /></g> },
  { name: "Messenger", art: <><circle cx="11" cy="9" r="6" fill="#afd244" /><path d="M2 26Q2 15 11 15Q20 16 19 31H8Q2 31 2 26Z" fill="#91bd33" /><circle cx="25" cy="8" r="7" fill="#2f9fda" /><path d="M15 28Q13 15 25 15Q37 16 36 27Q33 30 32 34H19Z" fill="#1b86c4" /></> },
  { name: "Download Manager", art: <><ellipse cx="18" cy="29" rx="16" ry="6" fill="#dfe4e4" /><path d="M3 27L9 24 18 33 5 32Z" fill="#ec8b35" /><path d="M33 27L27 24 20 34Z" fill="#48b6b6" /><circle cx="18" cy="15" r="13.500" fill="#2563ad" /><path d="M8 8Q14 1 20 3L17 9 10 13ZM21 8L29 10 27 20Z" fill="#8ecbe8" /><path d="M14 11h9v14h6L18 35 8 25h6Z" fill="#8fc645" stroke="#c6e69a" /></> },
  { name: "Remote Desktop", art: <><path d="M1 8Q3 22 17 20Z" fill="#9da3a3" /><path d="M3 3Q0 18 17 20L20 4Q12 10 3 3Z" fill="#ced2d2" stroke="#eee" strokeWidth=".8" /><path d="M10 12L20 2M10 20L7 26H17" stroke="#e2e4e4" strokeWidth="1.600" fill="none" /><path d="M12 16h26v18H12z" fill="#c7d5da" /><path d="M14 18h22v14H14z" fill="#39a4be" /><path d="M19 20Q21 19 23 20L22 24Q20 23 18 24Z" fill="#ec633e" /><path d="M24 20.500Q26 22 29 21L28 25Q25 26 23 24.500Z" fill="#8acb4c" /><path d="M18 25Q20 24 22 25L21 29Q19 28 17 29Z" fill="#4189dc" /><path d="M23 25.500Q25 27 28 26L27 30Q24 31 22 29.500Z" fill="#f4cb43" /><path d="M20 34h10l3 3H17z" fill="#8d9b9e" /></> },
  { name: "Recycling Bag", art: <><path d="M5 13L7 4 12 7 16 1 21 6 30 2 32 13Z" fill="#332d2b" /><path d="M8 8L12 4 15 10ZM19 7L25 4 27 9Z" fill="#efe1ca" /><path d="M12 2L18 10" stroke="#d7352b" strokeWidth="2" /><path d="M3 12H33V34H3Z" fill="#c8935c" /><path d="M3 12H33V16H3Z" fill="#e1b27d" /><path d="M14 22L18 17 22 22M24 24L21 30H18M15 30L12 25" fill="none" stroke="#9c6c3e" strokeWidth="2.500" /></> },
  { name: "TeamViewer", on: true, art: <><path d="M2 0L33 4V35L28 36 2 29Z" fill="#147eea" /><path d="M28 3L33 4V35L28 36Z" fill="#0a4fc7" /><ellipse cx="15" cy="18" rx="11" ry="12" fill="#f7fafc" /><path d="M5 18L11 13V16H19V13L25 18 19 23V20H11V23Z" fill="#1c7cdb" /></> },
];

const dockFiles = [
  { name: "Bridge folder", art: <><path d="M6 4L8 1H17L19 3H33V33H6Z" fill="#281864" /><path d="M4 7L6 4H32V33H4Z" fill="#451c28" /><path d="M1 6H14L17 10H35V34H1Z" fill="#2a1805" /><path d="M1 11H35V34H1Z" fill="#1d1103" /><text x="4" y="28" fontFamily="Inter, sans-serif" fontWeight="600" fontSize="13" fill="#f8b52a">Br</text></> },
  { name: "Scanned files", art: <><path d="M5 0h27v14H5z" fill="#f4f4f2" /><path d="M9 2L12 12M28 2L25 12" stroke="#d9b35b" strokeWidth="2" /><path d="M1 11h34v20H1z" fill="#fafafa" stroke="#ccc" /><text x="18" y="23" textAnchor="middle" fontFamily="Liberation Serif" fontWeight="700" fontSize="6" fill="#222">Thug Life</text></> },
  { name: "Trash", art: <><path d="M4 6Q10 0 16 4Q24-1 32 6V11H4Z" fill="#e9eaea" /><path d="M8 6L13 4 15 8ZM21 4L27 7 22 9Z" fill="#444" /><path d="M4 8H32L28 33Q18 38 8 33Z" fill="#d7dbda" /><ellipse cx="18" cy="8" rx="14" ry="2.500" fill="none" stroke="#f8f8f8" strokeWidth="1.500" /><path d="M12 12L14 33M18 12V34M24 12L22 33M8 12L11 30M28 12L25 30" stroke="#c6cac9" fill="none" /></> },
];

function DockItem({ app }) {
  return (
    <button aria-label={app.name} className="flex w-9 flex-col items-center">
      <svg width="36" height="36" viewBox="0 0 36 36" className="block overflow-visible">{app.art}</svg>
      {app.on && <span className="mt-[3px] h-1 w-1 rounded-full bg-black" />}
    </button>
  );
}

function Dock() {
  return (
    <footer className="relative z-20 shrink-0 border-t border-[#0d1212] bg-gradient-to-r from-[#16231c] to-[#14292a] px-[33px]">
      <div className="flex h-[51px] items-start rounded-t-[5px] bg-gradient-to-r from-[#5b6a62] via-[#5d6864] to-[#526867] px-1.5 pt-1.5">
        <div className="flex flex-1 justify-between">{dockApps.map((a) => <DockItem key={a.name} app={a} />)}</div>
        <span className="ml-3 mr-[11px] mt-0.5 h-9 w-px bg-[#37474a]" />
        <div className="flex w-[121px] justify-between">{dockFiles.map((a) => <DockItem key={a.name} app={a} />)}</div>
      </div>
    </footer>
  );
}

export default function App() {
  return (
    <div className="flex min-h-screen flex-col bg-[#5b7082]">
      <MenuBar />
      <main className="relative flex flex-1 flex-col overflow-hidden">
        <DetailsWindow />
        <PreviewWindow />
      </main>
      <Dock />
    </div>
  );
}
